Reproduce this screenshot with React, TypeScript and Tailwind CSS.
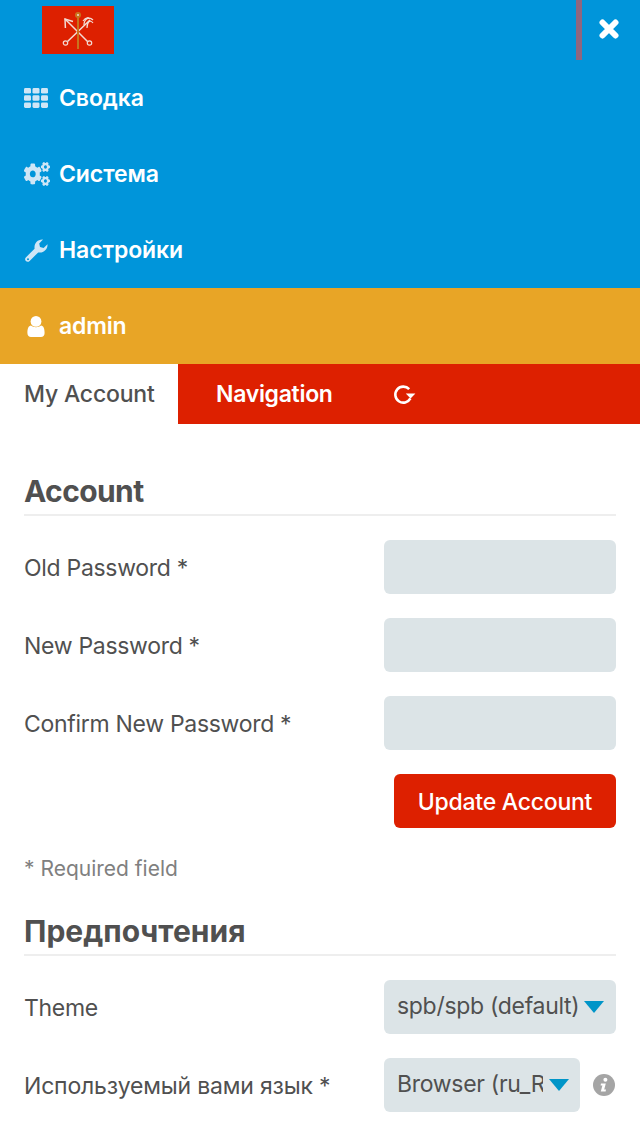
import React from "react";
import { FaCogs } from "react-icons/fa";

function GridIcon() {
  const cells = [0, 1, 2];
  return (
    <svg width="24" height="20" viewBox="0 0 24 20" fill="#cfe6f6">
      {cells.map((r) =>
        cells.map((c) => <rect key={`${r}-${c}`} x={c * 8.5} y={r * 7.2} width="7" height="5.6" rx="1.4" />)
      )}
    </svg>
  );
}

function WrenchIcon() {
  return (
    <svg width="23" height="23" viewBox="0 0 23 23" fill="#cfe6f6" className="ml-px">
      <path d="M0.8 18.4 L9.6 9.8 C8.8 4.8 12.5 0.2 18 0.6 L14.2 4.6 L15 8.1 L18.6 9 L22.5 5.2 C22.9 10.8 17.9 14.6 13.2 13.4 L4.6 22 C3.5 23.1 1.9 23.1 0.9 22.1 C-0.1 21.1 -0.2 19.4 0.8 18.4 Z" />
      <circle cx="3" cy="20.2" r="1" fill="#0095da" />
    </svg>
  );
}

function UserIcon() {
  return (
    <svg width="18" height="21" viewBox="0 0 18 21" fill="white">
      <circle cx="9" cy="5.4" r="5.4" />
      <path d="M4 9.6 C6.6 11.8 11.4 11.8 14 9.6 C16.6 10 17.6 12.6 17.6 17 C17.6 19.6 16 21 14 21 H4 C2 21 0.4 19.6 0.4 17 C0.4 12.6 1.4 10 4 9.6 Z" />
    </svg>
  );
}

function CloseIcon() {
  return (
    <svg width="20" height="20" viewBox="0 0 20 20" stroke="white" strokeWidth="6" strokeLinecap="round">
      <path d="M3.5 3.5 L16.5 16.5 M16.5 3.5 L3.5 16.5" />
    </svg>
  );
}

function RefreshIcon() {
  return (
    <svg width="23" height="21" viewBox="0 0 23 21" fill="none">
      <path d="M17.4 14.4 A8 8 0 1 1 16.2 5.2" stroke="white" strokeWidth="2.6" />
      <path d="M12.8 9.4 H22.4 L17.6 14.6 Z" fill="white" />
    </svg>
  );
}

function Caret({ className }: { className: string }) {
  return (
    <svg width="20" height="12" viewBox="0 0 20 12" fill="#0095c8" className={className}>
      <path d="M0 0 H20 L10 12 Z" />
    </svg>
  );
}

function InfoIcon() {
  return (
    <svg width="22" height="22" viewBox="0 0 22 22" className="mr-px ml-[13px]">
      <circle cx="11" cy="11" r="11" fill="#a5a5a5" />
      <circle cx="12.4" cy="5.8" r="2" fill="white" />
      <path d="M8 9.6 H12.8 L11.2 15.6 H13 L12.6 17.4 H7.8 L9.4 11.4 H7.6 Z" fill="white" />
    </svg>
  );
}

function Flag() {
  const line = "#f3dcd4";
  return (
    <div className="flex h-12 w-[72px] items-center justify-center bg-[#dd2000]">
      <svg width="32" height="38" viewBox="0 0 32 38" fill="none">
        <path d="M3 8 L25.5 30.5 M28 9 L5.5 30.5" stroke={line} strokeWidth="1.5" />
        <path d="M11 10.5 L3 8 L3.4 17" stroke={line} strokeWidth="1.5" />
        <path d="M22 14 C22 8 27 5 31 9 M25 17 C25 11 28 8 31 12 M21 10 C24 6 27 6 28 8" stroke={line} strokeWidth="1.2" />
        <circle cx="3.5" cy="32" r="2.2" stroke={line} strokeWidth="1.2" />
        <circle cx="27.5" cy="32" r="2.2" stroke={line} strokeWidth="1.2" />
        <path d="M16 5 V38" stroke="#c8741f" strokeWidth="2" />
        <circle cx="16" cy="4" r="3" fill="#c8741f" />
        <circle cx="16" cy="4" r="1" fill="#f3dcd4" />
      </svg>
    </div>
  );
}

function NavItem({ icon, label }: { icon: React.ReactNode; label: string }) {
  return (
    <div className="flex h-[76px] items-center pl-6">
      <span className="flex w-[35px] items-center">{icon}</span>
      <span className="text-[23px] font-semibold tracking-[-0.1px] text-white">{label}</span>
    </div>
  );
}

function PasswordRow({ label }: { label: string }) {
  return (
    <div className="flex h-[54px] items-center justify-between">
      <span className="pt-[3px] text-[23px] tracking-[-0.3px] text-[#505050]">{label}</span>
      <div className="h-[54px] w-[232px] rounded-md bg-[#dce4e7]" />
    </div>
  );
}

function SectionTitle({ children, className }: { children: React.ReactNode; className?: string }) {
  return (
    <h2 className={`border-b-2 border-[#eeeeee] pb-[4px] text-[30px] leading-[38px] font-bold text-[#505050] ${className ?? ""}`}>
      {children}
    </h2>
  );
}

export default function App() {
  return (
    <div className="h-[1136px] overflow-hidden bg-white font-['Inter','Liberation_Sans',sans-serif]">
      <div className="bg-[#0095da]">
        <div className="flex h-[60px] items-start justify-between">
          <div className="mt-[6px] ml-[42px]">
            <Flag />
          </div>
          <div className="flex h-[60px]">
            <div className="h-[60px] w-[6px] bg-[#8f667f]" />
            <div className="flex w-[58px] items-center justify-center pr-[4px] pb-[2px]">
              <CloseIcon />
            </div>
          </div>
        </div>
        <NavItem icon={<GridIcon />} label="Сводка" />
        <NavItem icon={<FaCogs className="h-[24px] w-[26px] text-[#cfe6f6]" preserveAspectRatio="none" />} label="Система" />
        <NavItem icon={<WrenchIcon />} label="Настройки" />
      </div>
      <div className="flex h-[76px] items-center bg-[#e8a526] pl-[27px]">
        <span className="flex w-[32px]">
          <UserIcon />
        </span>
        <span className="text-[23px] font-semibold tracking-[-0.2px] text-white">admin</span>
      </div>
      <div className="flex h-[60px] items-center bg-[#dd2000]">
        <div className="flex h-full w-[178px] items-center bg-white pl-6 text-[23px] font-medium tracking-[-0.2px] text-[#505050]">
          My Account
        </div>
        <span className="ml-[38px] text-[23px] font-semibold tracking-[-0.3px] text-white">Navigation</span>
        <span className="ml-[60px] flex">
          <RefreshIcon />
        </span>
      </div>
      <div className="px-6 pt-[48px]">
        <SectionTitle className="tracking-[-0.6px]">Account</SectionTitle>
        <div className="mt-6 flex flex-col gap-6">
          <PasswordRow label="Old Password *" />
          <PasswordRow label="New Password *" />
          <PasswordRow label="Confirm New Password *" />
        </div>
        <div className="mt-6 flex justify-end">
          <button className="h-[54px] w-[222px] rounded-md bg-[#dd2000] pt-[2px] text-[23px] font-medium tracking-[-0.25px] text-white">
            Update Account
          </button>
        </div>
        <p className="mt-[27px] text-[21px] leading-[28px] text-[#808080]">* Required field</p>
        <div className="mt-[29px]">
          <SectionTitle>Предпочтения</SectionTitle>
        </div>
        <div className="mt-6 flex h-[54px] items-center justify-between">
          <span className="pt-[2px] text-[23px] tracking-[-0.3px] text-[#505050]">Theme</span>
          <div className="flex h-[54px] w-[232px] items-center justify-between rounded-md bg-[#dce4e7] pr-[12px] pb-[2px] pl-[13px] text-[23px] tracking-[-0.3px] whitespace-nowrap text-[#505050]">
            <span>spb/spb (default)</span>
            <Caret className="mt-[2px] shrink-0" />
          </div>
        </div>
        <div className="mt-6 flex h-[54px] items-center justify-between">
          <span className="pt-[2px] text-[23px] tracking-[-0.18px] text-[#505050]">Используемый вами язык *</span>
          <div className="flex items-center">
            <div className="flex h-[54px] w-[196px] items-center justify-between rounded-md bg-[#dce4e7] pr-[11px] pb-[2px] pl-[13px] text-[23px] tracking-[-0.3px] whitespace-nowrap text-[#505050]">
              <span className="w-[146px] overflow-hidden">Browser (ru_RU)</span>
              <Caret className="mt-[2px] shrink-0" />
            </div>
            <InfoIcon />
          </div>
        </div>
      </div>
    </div>
  );
}
